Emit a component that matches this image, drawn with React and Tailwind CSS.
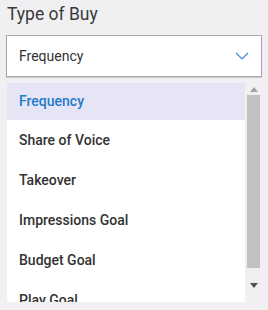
import { useState } from 'react';

const options = ['Frequency', 'Share of Voice', 'Takeover', 'Impressions Goal', 'Budget Goal', 'Play Goal'];

export default function App() {
    const [selected, setSelected] = useState('Frequency');

    return (
        <div className="w-[268px] h-[310px] bg-[#f0f0f3] pl-[6px] pr-[6px] pt-[3px] font-['Roboto',sans-serif] overflow-hidden">
            <div className="text-[17.5px] leading-[22px] text-[#3a3a3a] pl-[1px]">Type of Buy</div>

            <div className="mt-[10px] h-[42px] bg-white border border-[#a8a8ae] shadow-[0_1px_1px_rgba(0,0,0,0.15)] flex items-center justify-between pl-[12px] pr-[12px]">
                <span className="text-[14px] text-[#333]">{selected}</span>
                <svg width="14" height="8" viewBox="0 0 14 8" fill="none">
                    <path d="M1 1l6 6 6-6" stroke="#3a8fd8" strokeWidth="1.2" />
                </svg>
            </div>

            <div className="mt-[6px] ml-[1px] h-[219px] bg-white flex overflow-hidden">
                <div className="flex-1 overflow-hidden">
                    {options.map((opt, i) => (
                        <div
                            key={opt}
                            onClick={() => setSelected(opt)}
                            className={
                                (i === 0 ? 'h-[37px] ' : 'h-[40px] ') +
                                (opt === selected ? 'bg-[#e5e5f5] text-[#1f7bcc] ' : 'text-[#333] ') +
                                'flex items-center pl-[12px] text-[14px] font-medium'
                            }
                        >
                            {opt}
                        </div>
                    ))}
                </div>
                <div className="w-[17px] bg-[#f0f0f0] flex flex-col items-center">
                    <div className="h-[12px] flex items-center justify-center">
                        <svg width="8" height="5" viewBox="0 0 8 5"><path d="M4 0L8 5H0z" fill="#a3a3a3" /></svg>
                    </div>
                    <div className="w-[13px] h-[173px] bg-[#c1c1c1]" />
                    <div className="flex-1 flex items-center justify-center">
                        <svg width="8" height="5" viewBox="0 0 8 5"><path d="M0 0h8L4 5z" fill="#505050" /></svg>
                    </div>
                </div>
            </div>
        </div>
    );
}
